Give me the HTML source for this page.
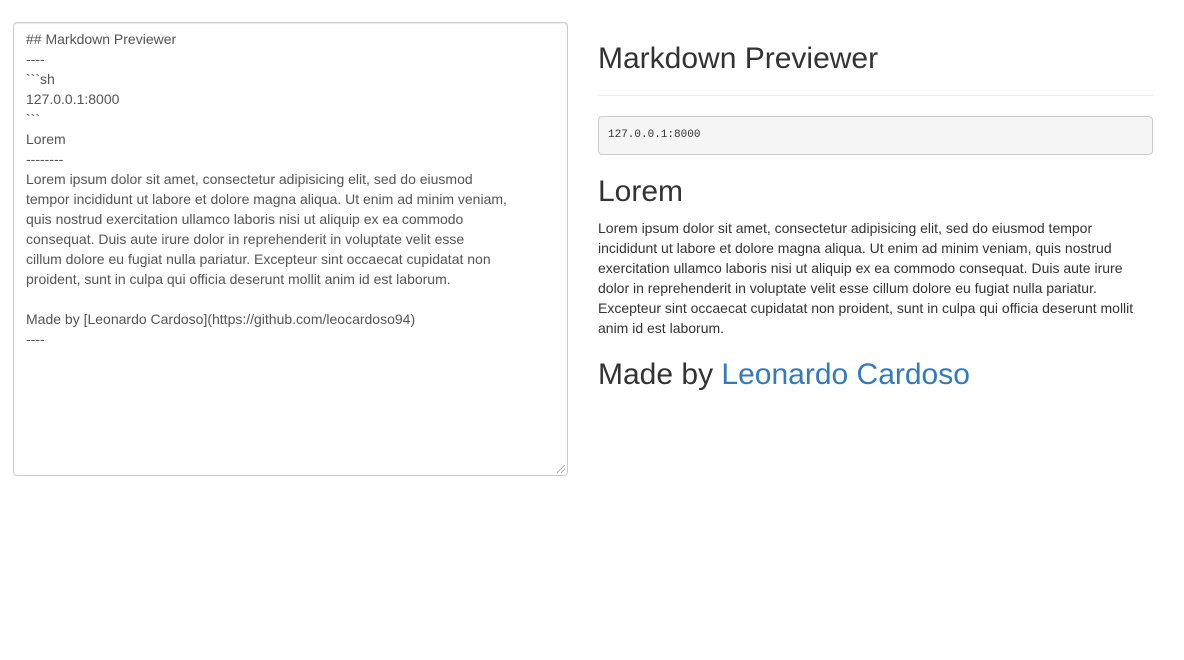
<!DOCTYPE html>
<html><head><meta charset="utf-8"><style>
body{margin:0;background:#fff;font-family:"Liberation Sans",Arial,sans-serif;color:#333;width:1184px;height:660px;overflow:hidden;position:relative}
.ta{position:absolute;left:13px;top:22px;width:555px;height:454px;border:1px solid #ccc;border-radius:4px;box-sizing:border-box;padding:6px 12px;font-size:14px;line-height:20px;color:#555;white-space:pre-wrap;box-shadow:inset 0 1px 1px rgba(0,0,0,.075)}
.grip{position:absolute;right:2px;bottom:2px;width:8px;height:8px;background:linear-gradient(135deg,transparent 45%,#999 45%,#999 52%,transparent 52%,transparent 70%,#999 70%,#999 77%,transparent 77%)}
.r{position:absolute;left:598px;width:555px}
h2{margin:0;font-weight:500;font-size:30px;line-height:33px}
hr{position:absolute;left:598px;top:95px;width:555px;border:0;border-top:1px solid #eee;margin:0}
pre{position:absolute;left:598px;top:116px;width:555px;height:39px;box-sizing:border-box;margin:0;background:#f5f5f5;border:1px solid #ccc;border-radius:4px;padding:0 9px;font-family:"Liberation Mono",monospace;font-size:11px;line-height:37px;color:#333}
p{margin:0;font-size:14px;line-height:20px}
a{color:#337ab7;text-decoration:none}
</style></head><body>
<div class="ta">## Markdown Previewer
----
&#96;&#96;&#96;sh
127.0.0.1:8000
&#96;&#96;&#96;
Lorem
--------
Lorem ipsum dolor sit amet, consectetur adipisicing elit, sed do eiusmod
tempor incididunt ut labore et dolore magna aliqua. Ut enim ad minim veniam,
quis nostrud exercitation ullamco laboris nisi ut aliquip ex ea commodo
consequat. Duis aute irure dolor in reprehenderit in voluptate velit esse
cillum dolore eu fugiat nulla pariatur. Excepteur sint occaecat cupidatat non
proident, sunt in culpa qui officia deserunt mollit anim id est laborum.

Made by [Leonardo Cardoso](https://github.com/leocardoso94)
----<div class="grip"></div></div>
<h2 class="r" style="top:42px">Markdown Previewer</h2>
<hr>
<pre>127.0.0.1:8000</pre>
<h2 class="r" style="top:175px">Lorem</h2>
<p class="r" style="top:218px">Lorem ipsum dolor sit amet, consectetur adipisicing elit, sed do eiusmod tempor incididunt ut labore et dolore magna aliqua. Ut enim ad minim veniam, quis nostrud exercitation ullamco laboris nisi ut aliquip ex ea commodo consequat. Duis aute irure dolor in reprehenderit in voluptate velit esse cillum dolore eu fugiat nulla pariatur. Excepteur sint occaecat cupidatat non proident, sunt in culpa qui officia deserunt mollit anim id est laborum.</p>
<h2 class="r" style="top:358px">Made by <a>Leonardo Cardoso</a></h2>
</body></html>
